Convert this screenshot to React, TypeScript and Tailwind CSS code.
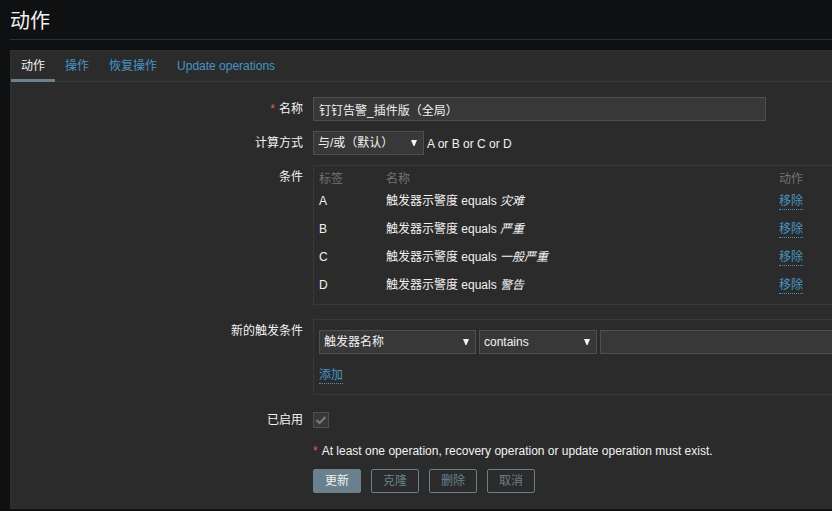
import { useState, type ReactNode } from "react";
import { clsx } from "clsx";

const tabs = ["动作", "操作", "恢复操作", "Update operations"];

const conditions = [
  { label: "A", value: "灾难" },
  { label: "B", value: "严重" },
  { label: "C", value: "一般严重" },
  { label: "D", value: "警告" },
];

const fieldStyle = "h-6 border border-[#4f4f4f] bg-[#383838] text-[#f2f2f2] outline-none";
const linkStyle =
  "inline-block cursor-pointer border-b border-dotted border-[#4796c4] leading-4 text-[#4796c4]";

function Select({
  id,
  label,
  className,
  options,
}: {
  id: string;
  label?: string;
  className: string;
  options: string[];
}) {
  return (
    <span className={clsx("relative inline-block shrink-0", className)}>
      <select
        id={id}
        aria-label={label}
        className={clsx(fieldStyle, "block w-full appearance-none pl-1 pr-4")}
      >
        {options.map((option) => (
          <option key={option}>{option}</option>
        ))}
      </select>
      <svg
        className="pointer-events-none absolute top-2 right-1.5 h-2 w-2"
        viewBox="0 0 8 8"
        aria-hidden="true"
      >
        <path d="M1 1h6L4.5 7h-1z" fill="#f2f2f2" />
      </svg>
    </span>
  );
}

function Row({
  label,
  htmlFor,
  required,
  className,
  children,
}: {
  label?: string;
  htmlFor?: string;
  required?: boolean;
  className?: string;
  children: ReactNode;
}) {
  return (
    <div className={clsx("grid grid-cols-[293px_minmax(0,1fr)] gap-x-2.5", className)}>
      <div className="text-right leading-6">
        {required && <span className="mr-1 text-[#e45959]">*</span>}
        {label && <label htmlFor={htmlFor}>{label}</label>}
      </div>
      {children}
    </div>
  );
}

export default function App() {
  const [tab, setTab] = useState(0);

  return (
    <div className="min-h-screen overflow-x-hidden bg-[#0e1012] pl-2.5 font-['Liberation_Sans','Noto_Sans_CJK_SC',sans-serif] text-xs text-[#f2f2f2]">
      <h1 className="border-b border-[#303030] pt-2 pb-1 text-xl leading-[27px]">动作</h1>

      <main className="mt-2.5 border border-r-0 border-[#303030] bg-[#2b2b2b] pb-[15px]">
        <nav role="tablist" className="flex border-b border-[#383838]">
          {tabs.map((name, index) => (
            <button
              key={name}
              type="button"
              role="tab"
              aria-selected={tab === index}
              onClick={() => setTab(index)}
              className={clsx(
                "-mb-px h-[31px] cursor-pointer border-b-3 px-2.5 pt-0.5",
                tab === index
                  ? "border-[#69808d] text-[#f2f2f2]"
                  : "border-transparent text-[#4796c4]",
              )}
            >
              {name}
            </button>
          ))}
        </nav>

        <form className="-ml-px pt-[15px]" onSubmit={(event) => event.preventDefault()}>
          <Row label="名称" htmlFor="name" required>
            <input
              id="name"
              type="text"
              defaultValue="钉钉告警_插件版（全局）"
              className={clsx(fieldStyle, "w-[453px] max-w-full px-[5px]")}
            />
          </Row>

          <Row label="计算方式" htmlFor="evaltype" className="mt-2.5">
            <div className="flex items-center gap-[3px]">
              <Select id="evaltype" className="w-[111px]" options={["与/或（默认）"]} />
              <span className="pt-0.5">A or B or C or D</span>
            </div>
          </Row>

          <Row label="条件" className="mt-2.5">
            <div className="border border-r-0 border-[#383838] p-[5px]">
              <table className="w-full table-fixed text-left">
                <thead className="text-[#737373]">
                  <tr className="h-4 leading-4">
                    <th className="w-[67px] font-normal">标签</th>
                    <th className="font-normal">名称</th>
                    <th className="w-[48px] font-normal">动作</th>
                  </tr>
                </thead>
                <tbody>
                  {conditions.map((condition) => (
                    <tr key={condition.label} className="h-7">
                      <td>{condition.label}</td>
                      <td>
                        触发器示警度 equals <em>{condition.value}</em>
                      </td>
                      <td>
                        <button type="button" className={linkStyle}>
                          移除
                        </button>
                      </td>
                    </tr>
                  ))}
                </tbody>
              </table>
            </div>
          </Row>

          <Row label="新的触发条件" htmlFor="condition-type" className="mt-3.5">
            <div className="border border-r-0 border-[#383838] pt-2.5 pb-2.5 pl-[5px]">
              <div className="flex gap-[3px]">
                <Select id="condition-type" className="w-[157px]" options={["触发器名称"]} />
                <Select
                  id="operator"
                  label="运算符"
                  className="w-[118px]"
                  options={["contains"]}
                />
                <input
                  type="text"
                  aria-label="值"
                  className={clsx(fieldStyle, "min-w-0 flex-1 border-r-0 px-[5px]")}
                />
              </div>
              <button type="button" className={clsx(linkStyle, "mt-[13px] block")}>
                添加
              </button>
            </div>
          </Row>

          <Row label="已启用" htmlFor="enabled" className="mt-[13px]">
            <span className="relative my-1 block h-4 w-4">
              <input
                id="enabled"
                type="checkbox"
                defaultChecked
                className="peer block h-4 w-4 appearance-none border border-[#4f4f4f] bg-[#383838]"
              />
              <svg
                className="pointer-events-none absolute inset-0 hidden h-4 w-4 peer-checked:block"
                viewBox="0 0 16 16"
                aria-hidden="true"
              >
                <path d="M3.5 8l3 3 6-6" fill="none" stroke="#69808d" strokeWidth="2" />
              </svg>
            </span>
          </Row>

          <Row className="mt-[7px]">
            <p className="leading-6">
              <span className="mr-1 text-[#e45959]">*</span>
              At least one operation, recovery operation or update operation must exist.
            </p>
          </Row>

          <Row className="mt-1.5">
            <div className="flex gap-2.5">
              <button
                type="submit"
                className="h-6 w-12 rounded-xs border border-[#69808d] bg-[#69808d] text-[#f2f2f2]"
              >
                更新
              </button>
              {["克隆", "删除", "取消"].map((name) => (
                <button
                  key={name}
                  type="button"
                  className="h-6 w-12 rounded-xs border border-[#69808d] text-[#69808d]"
                >
                  {name}
                </button>
              ))}
            </div>
          </Row>
        </form>
      </main>
    </div>
  );
}
